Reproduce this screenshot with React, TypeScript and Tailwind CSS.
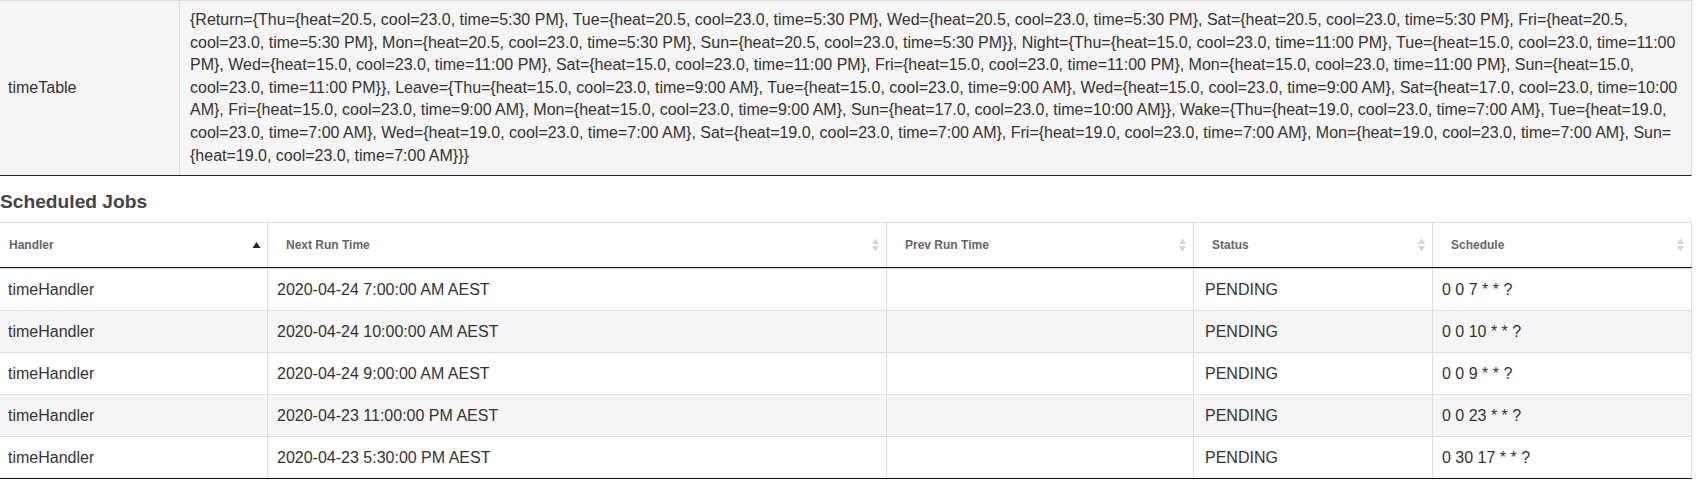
import React from "react";

const lines = [
  "{Return={Thu={heat=20.5, cool=23.0, time=5:30 PM}, Tue={heat=20.5, cool=23.0, time=5:30 PM}, Wed={heat=20.5, cool=23.0, time=5:30 PM}, Sat={heat=20.5, cool=23.0, time=5:30 PM}, Fri={heat=20.5,",
  "cool=23.0, time=5:30 PM}, Mon={heat=20.5, cool=23.0, time=5:30 PM}, Sun={heat=20.5, cool=23.0, time=5:30 PM}}, Night={Thu={heat=15.0, cool=23.0, time=11:00 PM}, Tue={heat=15.0, cool=23.0, time=11:00",
  "PM}, Wed={heat=15.0, cool=23.0, time=11:00 PM}, Sat={heat=15.0, cool=23.0, time=11:00 PM}, Fri={heat=15.0, cool=23.0, time=11:00 PM}, Mon={heat=15.0, cool=23.0, time=11:00 PM}, Sun={heat=15.0,",
  "cool=23.0, time=11:00 PM}}, Leave={Thu={heat=15.0, cool=23.0, time=9:00 AM}, Tue={heat=15.0, cool=23.0, time=9:00 AM}, Wed={heat=15.0, cool=23.0, time=9:00 AM}, Sat={heat=17.0, cool=23.0, time=10:00",
  "AM}, Fri={heat=15.0, cool=23.0, time=9:00 AM}, Mon={heat=15.0, cool=23.0, time=9:00 AM}, Sun={heat=17.0, cool=23.0, time=10:00 AM}}, Wake={Thu={heat=19.0, cool=23.0, time=7:00 AM}, Tue={heat=19.0,",
  "cool=23.0, time=7:00 AM}, Wed={heat=19.0, cool=23.0, time=7:00 AM}, Sat={heat=19.0, cool=23.0, time=7:00 AM}, Fri={heat=19.0, cool=23.0, time=7:00 AM}, Mon={heat=19.0, cool=23.0, time=7:00 AM}, Sun=",
  "{heat=19.0, cool=23.0, time=7:00 AM}}}",
];

const jobs = [
  ["timeHandler", "2020-04-24 7:00:00 AM AEST", "", "PENDING", "0 0 7 * * ?"],
  ["timeHandler", "2020-04-24 10:00:00 AM AEST", "", "PENDING", "0 0 10 * * ?"],
  ["timeHandler", "2020-04-24 9:00:00 AM AEST", "", "PENDING", "0 0 9 * * ?"],
  ["timeHandler", "2020-04-23 11:00:00 PM AEST", "", "PENDING", "0 0 23 * * ?"],
  ["timeHandler", "2020-04-23 5:30:00 PM AEST", "", "PENDING", "0 30 17 * * ?"],
];

const headers = ["Handler", "Next Run Time", "Prev Run Time", "Status", "Schedule"];

function SortAsc() {
  return (
    <svg width="9" height="14" viewBox="0 0 9 14">
      <polygon points="0.5,10 4.5,4 8.5,10" fill="#222" />
    </svg>
  );
}

function SortBoth() {
  return (
    <svg width="9" height="16" viewBox="0 0 9 16">
      <polygon points="1,7 4.5,1.5 8,7" fill="#d6d6d6" />
      <polygon points="1,9 4.5,14.5 8,9" fill="#d6d6d6" />
    </svg>
  );
}

const cols = "grid grid-cols-[268px_619px_307px_239px_259px]";

export default function App() {
  return (
    <div
      className="w-[1702px] h-[491px] bg-white text-[#333] overflow-hidden"
      style={{ fontFamily: '"Liberation Sans", Arial, sans-serif' }}
    >
      <div className="w-[1692px] flex border-t border-t-[#ddd] border-b border-b-[#222] border-r border-r-[#ddd] bg-[#f5f5f5]">
        <div className="w-[180px] shrink-0 border-r border-r-[#ddd] flex items-center pl-[8px] text-[16px]">
          timeTable
        </div>
        <div className="flex-1 pl-[10px] pr-[10px] py-[8px] text-[16px] leading-[22.6px]">
          {lines.map((l, i) => (
            <div key={i} className="whitespace-nowrap">
              {l}
            </div>
          ))}
        </div>
      </div>

      <div className="pt-[15px] pb-[9px] text-[19.2px] leading-[22px] font-bold text-[#444]">
        Scheduled Jobs
      </div>

      <div className="w-[1692px] border-t border-t-[#ddd] border-b border-b-[#111]">
        <div className={`${cols} border-b border-b-[#111]`}>
          {headers.map((h, i) => (
            <div
              key={h}
              className={`h-[44px] flex items-center justify-between border-r border-r-[#ddd] ${
                i === 0 ? "pl-[9px] pr-[6px]" : "pl-[18px] pr-[6px]"
              } text-[12px] font-bold text-[#666]`}
            >
              <span>{h}</span>
              {i === 0 ? <SortAsc /> : <SortBoth />}
            </div>
          ))}
        </div>
        {jobs.map((row, r) => (
          <div
            key={r}
            className={`${cols} border-t border-t-[#ddd] ${r % 2 === 1 ? "bg-[#f5f5f5]" : "bg-white"}`}
          >
            {row.map((c, i) => (
              <div
                key={i}
                className={`h-[41px] flex items-center border-r border-r-[#ddd] text-[16px] ${
                  i === 0 ? "pl-[8px]" : i === 3 ? "pl-[11px]" : "pl-[9px]"
                }`}
              >
                {c}
              </div>
            ))}
          </div>
        ))}
      </div>
    </div>
  );
}
